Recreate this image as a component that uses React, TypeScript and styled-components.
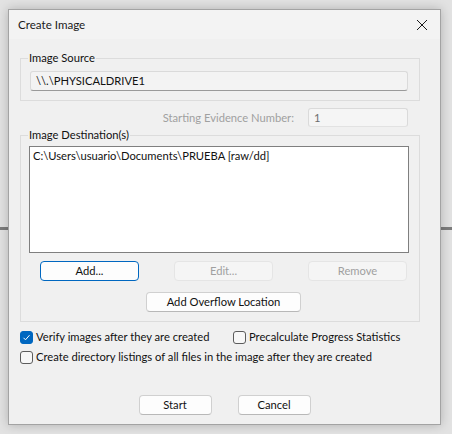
import React from "react";
import styled, { createGlobalStyle, css } from "styled-components";

const GlobalStyle = createGlobalStyle`
  html, body {
    margin: 0;
    padding: 0;
  }
  body {
    width: 452px;
    height: 434px;
    overflow: hidden;
    background:
      linear-gradient(to bottom, transparent 227px, #7c7c7c 227px, #7c7c7c 230px, transparent 230px),
      #e2e2e2;
    font-family: Lato, "Segoe UI", sans-serif;
    font-size: 11.2px;
    line-height: 16px;
    color: #111;
    white-space: nowrap;
  }
`;

const Desktop = styled.div`
  padding: 9px 0 0 8px;
`;

const Window = styled.div`
  width: 433px;
  height: 416px;
  box-sizing: border-box;
  border: 1px solid #a3a3a3;
  background: #f0f0f0;
  box-shadow: 0 0 10px rgba(0, 0, 0, 0.22);
  display: flex;
  flex-direction: column;
`;

const TitleBar = styled.div`
  height: 29px;
  background: #f3f3f3;
  display: flex;
  align-items: center;
  justify-content: space-between;
  padding: 0 9px;
`;

const Title = styled.span`
  font-size: 11.6px;
  color: #1a1a1a;
`;

const CloseButton = styled.span`
  display: flex;
  width: 12px;
  height: 12px;
  margin-right: 3px;
`;

const Body = styled.div`
  display: flex;
  flex-direction: column;
  padding: 11px 20px 0 11px;
`;

const Group = styled.fieldset<{ $pad: string }>`
  margin: 0;
  padding: ${(p) => p.$pad};
  border: 1px solid #dcdcdc;
  min-width: 0;
  display: flex;
  flex-direction: column;
`;

const Legend = styled.legend<{ $shift?: number }>`
  padding: 0 1px;
  margin-left: ${(p) => p.$shift ?? -2}px;
  line-height: 16px;
  color: #111;
`;

const TextField = styled.div<{ $disabled?: boolean }>`
  height: 20px;
  box-sizing: border-box;
  border: 1px solid #dadada;
  border-bottom-color: ${(p) => (p.$disabled ? "#e2e2e2" : "#9a9a9a")};
  border-radius: 3px;
  background: ${(p) => (p.$disabled ? "#f5f5f5" : "#f3f3f3")};
  padding: 0 5px;
  display: flex;
  align-items: center;
  color: ${(p) => (p.$disabled ? "#6d6d6d" : "#111")};
`;

const EvidenceRow = styled.div`
  display: flex;
  justify-content: flex-end;
  align-items: center;
  margin-top: 7px;
  padding-right: 12px;
  height: 19px;
`;

const MutedLabel = styled.span`
  color: #a0a0a0;
  margin-right: 14px;
`;

const EvidenceField = styled(TextField)`
  width: 100px;
  height: 19px;
`;

const ListBox = styled.div`
  width: 380px;
  height: 107px;
  box-sizing: border-box;
  border: 1px solid #7f7f7f;
  background: #fff;
  padding: 1px 3px;
`;

const ButtonRow = styled.div`
  display: flex;
  justify-content: space-between;
  margin-top: 8px;
  padding: 0 12px 0 11px;
`;

const Button = styled.button<{ $w: number; $focused?: boolean }>`
  width: ${(p) => p.$w}px;
  height: 20px;
  box-sizing: border-box;
  padding: 0;
  font: inherit;
  color: #111;
  background: #fdfdfd;
  border: 1px solid #d0d0d0;
  border-bottom-color: #b8b8b8;
  border-radius: 4px;
  ${(p) =>
    p.$focused &&
    css`
      border: 1px solid #0067c0;
    `}
  &:disabled {
    background: #f5f5f5;
    border-color: #e5e5e5;
    color: #a0a0a0;
  }
`;

const OverflowButton = styled(Button)`
  margin: 11px 0 0 117px;
`;

const Options = styled.div`
  display: grid;
  grid-template-columns: 213px auto;
  row-gap: 4px;
  margin-top: 7px;
`;

const Option = styled.label<{ $span?: boolean }>`
  display: flex;
  align-items: center;
  gap: 3px;
  height: 16px;
  ${(p) =>
    p.$span &&
    css`
      grid-column: 1 / span 2;
    `}
`;

const Box = styled.span<{ $checked?: boolean }>`
  width: 13px;
  height: 13px;
  flex: none;
  box-sizing: border-box;
  border-radius: 3px;
  display: flex;
  align-items: center;
  justify-content: center;
  ${(p) =>
    p.$checked
      ? css`
          background: #0067c0;
          border: 1px solid #0067c0;
        `
      : css`
          background: #f7f7f7;
          border: 1px solid #5c5c5c;
        `}
`;

const Footer = styled.div`
  display: flex;
  justify-content: center;
  gap: 26px;
  margin-top: 30px;
`;

const Checkbox = ({ checked, label, span }: { checked?: boolean; label: string; span?: boolean }) => (
  <Option $span={span}>
    <Box $checked={checked}>
      {checked && (
        <svg width="9" height="9" viewBox="0 0 9 9">
          <polyline points="1.5,4.8 3.5,6.8 7.5,2.2" fill="none" stroke="#fff" strokeWidth="1" />
        </svg>
      )}
    </Box>
    <span>{label}</span>
  </Option>
);

export default function App() {
  return (
    <>
      <GlobalStyle />
      <Desktop>
        <Window>
          <TitleBar>
            <Title>Create Image</Title>
            <CloseButton>
              <svg width="12" height="12" viewBox="0 0 12 12">
                <path d="M1 1 L11 11 M11 1 L1 11" stroke="#1a1a1a" strokeWidth="1" fill="none" />
              </svg>
            </CloseButton>
          </TitleBar>
          <Body>
            <Group $pad="5px 11px 9px 9px">
              <Legend>Image Source</Legend>
              <TextField>\\.\PHYSICALDRIVE1</TextField>
            </Group>

            <EvidenceRow>
              <MutedLabel>Starting Evidence Number:</MutedLabel>
              <EvidenceField $disabled>1</EvidenceField>
            </EvidenceRow>

            <Group $pad="3px 0 9px 8px">
              <Legend $shift={-1}>Image Destination(s)</Legend>
              <ListBox>C:\Users\usuario\Documents\PRUEBA [raw/dd]</ListBox>
              <ButtonRow>
                <Button $w={99} $focused>Add...</Button>
                <Button $w={99} disabled>Edit...</Button>
                <Button $w={99} disabled>Remove</Button>
              </ButtonRow>
              <OverflowButton $w={155}>Add Overflow Location</OverflowButton>
            </Group>

            <Options>
              <Checkbox checked label="Verify images after they are created" />
              <Checkbox label="Precalculate Progress Statistics" />
              <Checkbox span label="Create directory listings of all files in the image after they are created" />
            </Options>
          </Body>
          <Footer>
            <Button $w={73}>Start</Button>
            <Button $w={73}>Cancel</Button>
          </Footer>
        </Window>
      </Desktop>
    </>
  );
}
